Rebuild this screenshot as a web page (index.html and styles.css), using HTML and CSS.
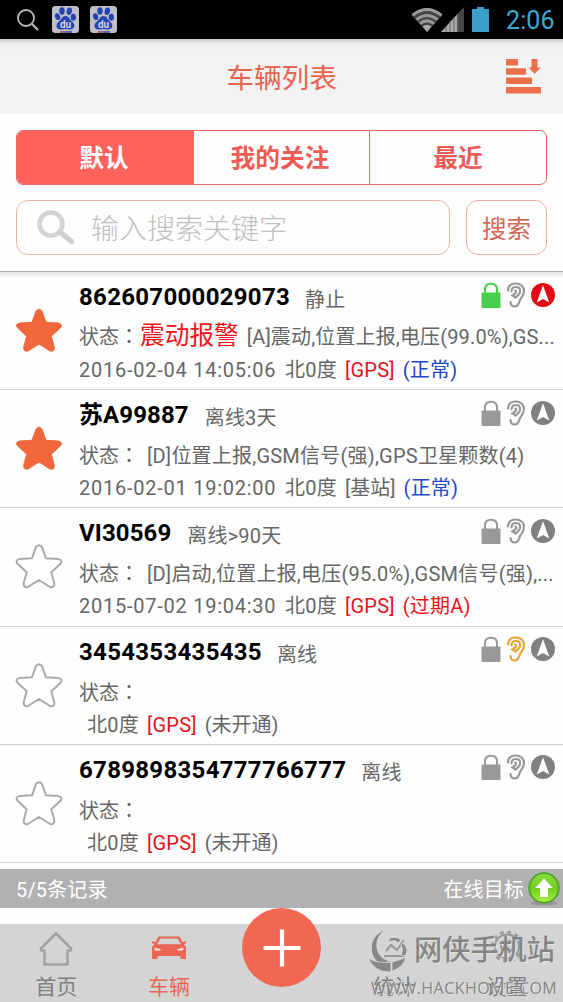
FILE: index.html
```html
<!DOCTYPE html>
<html lang="zh-CN">
<head>
<meta charset="utf-8">
<title>车辆列表</title>
<link rel="stylesheet" href="styles.css">
</head>
<body>
<svg class="defs" width="0" height="0">
  <defs>
    <symbol id="star" viewBox="0 0 48 46"><path d="M21 4.200Q24 .2 27 4.200L31 15.300L43.500 16.100Q48.400 17.400 45.200 21L36.300 29.200L39.300 40.200Q39.600 45 35 44L24 37L13 44Q8.400 45 8.700 40.200L11.700 29.200L2.800 21Q-.4 17.400 4.500 16.100L17 15.300Z"/></symbol>
    <symbol id="lock" viewBox="0 0 20 26"><rect x=".5" y="10.500" width="19" height="15.500" rx=".8" fill="currentColor"/><path d="M4 11V7.500Q4 1.700 10 1.700T16 7.500V11" fill="none" stroke="currentColor" stroke-width="2"/></symbol>
    <symbol id="ear" viewBox="0 0 20 26"><g fill="none" stroke="currentColor" stroke-width="2.200" stroke-linecap="round"><path d="M2 8.500C2.300 3.800 5.400 1.500 9.700 1.500C14.400 1.500 18 4.400 18 8.900C18 13.300 15.500 15 14 18C13 20.500 12.700 24.500 8.900 24.500C6.500 24.500 4.700 22.700 4.600 20.200"/><path d="M5.500 9.300C5.600 6.500 7.300 5 9.800 5C12.700 5 14.200 6.900 14.200 9.200C14.200 11.900 12 13 10.700 14.600C9.800 16 8.500 15.800 8.500 14.500C8.500 13.200 6.800 14.400 6 13.300"/><path d="M9.300 8.500Q11.200 9.300 9.500 11.100L7.500 12.500"/></g></symbol>
    <symbol id="nav" viewBox="0 0 24 24"><circle cx="12" cy="12" r="12" fill="currentColor"/><path d="M12 2.200L18.300 19.500L12 16L5.700 19.500Z" fill="#fff"/></symbol>
    <symbol id="paw" viewBox="0 0 27 27"><rect width="27" height="27" rx="3.500" fill="#bfbfc9"/><g fill="#2444b0"><ellipse cx="10" cy="5" rx="2.700" ry="3.700"/><ellipse cx="17.300" cy="5.200" rx="2.700" ry="3.700" transform="rotate(12 17.300 5.200)"/><ellipse cx="5.600" cy="10.700" rx="2.600" ry="3.500" transform="rotate(-15 5.600 10.700)"/><ellipse cx="21.300" cy="11.300" rx="2.600" ry="3.500"/><path d="M13.500 10C17 10 17.500 13.500 20 15.500C25 20 21 24 17.500 23.400Q13.500 22.700 9.500 23.400C4.500 24 2.500 19 7 15.500C9.500 13.500 10 10 13.500 10Z"/></g><text x="13.500" y="21.500" text-anchor="middle" class="paw-text">du</text><path d="M8 26H14" stroke="#a73d43" stroke-width="1.500"/><path d="M14 26H20" stroke="#2444b0" stroke-width="1.500"/></symbol>
  </defs>
</svg>
<main class="app">
  <div class="status">
    <svg class="st-search" viewBox="0 0 22 22"><circle cx="9" cy="9" r="8" fill="none" stroke="#bbb" stroke-width="1.800"/><path d="M15 15L21 21" stroke="#bbb" stroke-width="2.200"/></svg>
    <svg class="paw"><use href="#paw"/></svg>
    <svg class="paw"><use href="#paw"/></svg>
    <span class="grow"></span>
    <svg class="wifi" viewBox="0 0 32 24"><path d="M.5 7.300Q16-6 31.500 7.300L16 24Z" fill="#444"/><g fill="none" stroke="#999" stroke-width="3"><path d="M1.500 7.300Q16-4.500 30.500 7.300"/><path d="M5.500 11.600Q16 3.300 26.500 11.600"/><path d="M9 15.700Q16 10 23 15.700"/></g><path d="M11.500 18.500Q16 15 20.500 18.500L16 24Z" fill="#aaa"/></svg>
    <svg class="signal" viewBox="0 0 23 25"><path d="M0 25L23 0V25Z" fill="#444"/><path d="M0 25L16 7.600V25Z" fill="#aaa"/><path d="M5 19V25M9 14V25M13 10V25M17 6V25" stroke="#666" stroke-width="1"/></svg>
    <svg class="battery" viewBox="0 0 17 25"><path d="M0 2H5V0H12V2H17V25H0Z" fill="#3c9dc9"/></svg>
    <span class="clock">2:06</span>
  </div>
  <header class="header">
    <h1>车辆列表</h1>
    <svg class="sort" viewBox="0 0 35 35"><g fill="#e9704a"><rect x="0" y="0" width="12" height="6.500" rx="1"/><rect x="0" y="9.300" width="20" height="6.500" rx="1"/><rect x="0" y="18.500" width="26" height="6.500" rx="1"/><rect x="0" y="28" width="35" height="6.500" rx="1"/><path d="M25.500 0H31.500V8.500H35L28.500 15L22.500 8.500H25.500Z"/></g></svg>
  </header>
  <section class="filters">
    <div class="tabs"><div class="tab active">默认</div><div class="tab">我的关注</div><div class="tab">最近</div></div>
    <div class="search">
      <div class="field"><svg viewBox="0 0 38 35"><circle cx="14" cy="14" r="11.500" fill="none" stroke="#d3d3d3" stroke-width="4.500"/><path d="M23 22L34.500 31.500" stroke="#d0d0d0" stroke-width="5.500" stroke-linecap="round"/></svg><span>输入搜索关键字</span></div>
      <div class="button">搜索</div>
    </div>
  </section>
  <section class="list">
    <article class="row first">
      <svg class="star on"><use href="#star"/></svg>
      <div class="body">
        <div class="top"><b class="imei">862607000029073</b><span class="state">静止</span><span class="icons"><svg class="lock green"><use href="#lock"/></svg><svg class="ear"><use href="#ear"/></svg><svg class="dir red-icon"><use href="#nav"/></svg></span></div>
        <div class="desc"><span class="label">状态<i lang="zh-TW">：</i></span><em>震动报警</em><span class="msg">[A]震动,位置上报,电压(99.0%),GS...</span></div>
        <div class="meta"><span class="date">2016-02-04 14:05:06</span><span class="head">北0度</span><span class="red">[GPS]</span><span class="blue">(正常)</span></div>
      </div>
    </article>
    <article class="row">
      <svg class="star on"><use href="#star"/></svg>
      <div class="body">
        <div class="top"><b class="plate">苏A99887</b><span class="state">离线3天</span><span class="icons"><svg class="lock"><use href="#lock"/></svg><svg class="ear"><use href="#ear"/></svg><svg class="dir"><use href="#nav"/></svg></span></div>
        <div class="desc"><span class="label">状态<i lang="zh-TW">：</i></span><span class="msg">[D]位置上报,GSM信号(强),GPS卫星颗数(4)</span></div>
        <div class="meta"><span class="date">2016-02-01 19:02:00</span><span class="head">北0度</span><span>[基站]</span><span class="blue">(正常)</span></div>
      </div>
    </article>
    <article class="row">
      <svg class="star"><use href="#star"/></svg>
      <div class="body">
        <div class="top"><b class="plate">VI30569</b><span class="state">离线&gt;90天</span><span class="icons"><svg class="lock"><use href="#lock"/></svg><svg class="ear"><use href="#ear"/></svg><svg class="dir"><use href="#nav"/></svg></span></div>
        <div class="desc"><span class="label">状态<i lang="zh-TW">：</i></span><span class="msg">[D]启动,位置上报,电压(95.0%),GSM信号(强),...</span></div>
        <div class="meta"><span class="date">2015-07-02 19:04:30</span><span class="head">北0度</span><span class="red">[GPS]</span><span class="red">(过期A)</span></div>
      </div>
    </article>
    <article class="row">
      <svg class="star"><use href="#star"/></svg>
      <div class="body">
        <div class="top"><b class="imei">3454353435435</b><span class="state">离线</span><span class="icons"><svg class="lock"><use href="#lock"/></svg><svg class="ear orange"><use href="#ear"/></svg><svg class="dir"><use href="#nav"/></svg></span></div>
        <div class="desc"><span class="label">状态<i lang="zh-TW">：</i></span></div>
        <div class="meta nodate"><span class="head">北0度</span><span class="red">[GPS]</span><span>(未开通)</span></div>
      </div>
    </article>
    <article class="row">
      <svg class="star"><use href="#star"/></svg>
      <div class="body">
        <div class="top"><b class="imei">6789898354777766777</b><span class="state">离线</span><span class="icons"><svg class="lock"><use href="#lock"/></svg><svg class="ear"><use href="#ear"/></svg><svg class="dir"><use href="#nav"/></svg></span></div>
        <div class="desc"><span class="label">状态<i lang="zh-TW">：</i></span></div>
        <div class="meta nodate"><span class="head">北0度</span><span class="red">[GPS]</span><span>(未开通)</span></div>
      </div>
    </article>
  </section>
  <div class="summary"><span>5/5条记录</span><span class="grow"></span><span>在线目标</span>
    <svg class="up" viewBox="0 0 32 34"><defs><linearGradient id="lime" x2="0" y2="1"><stop stop-color="#8bdc47"/><stop offset=".5" stop-color="#6fd01c"/><stop offset="1" stop-color="#b3f046"/></linearGradient></defs><ellipse cx="16" cy="31" rx="13" ry="2.500" fill="#999"/><circle cx="16" cy="16" r="14.800" fill="url(#lime)" stroke="#4fa528" stroke-width="1.800"/><path d="M16 6.500L25 16H20V25H12V16H7Z" fill="#fff"/></svg>
  </div>
  <nav class="nav">
    <div class="item"><svg viewBox="0 0 36 36"><path d="M18 2.500L33 17.500V19.500H29.500V33.500H6.500V19.500H3V17.500Z" fill="none" stroke="#a3a3a3" stroke-width="2.600" stroke-linejoin="round"/></svg><span>首页</span></div>
    <div class="item current"><svg viewBox="0 0 36 36"><path d="M7.500 5.500H28.500L33 13.500L35 16V28H29.500V25H6.500V28H1V16L3 13.500Z" fill="#eb6754"/><path d="M9.500 7.500H26.500L30 13.200H6Z" fill="#d4d4d4"/><path d="M1 10L5 11.500L3.500 13.500L1 12ZM35 10L31 11.500L32.500 13.500L35 12Z" fill="#eb6754"/><path d="M3.500 16.500L10 18.500L9 19.500H4ZM32.500 16.500L26 18.500L27 19.500H32Z" fill="#eee"/></svg><span>车辆</span></div>
    <div class="item"></div>
    <div class="item"><svg viewBox="0 0 36 36"><path d="M10 20L15 14L21 19L28 9M8 25H29" fill="none" stroke="#999" stroke-width="2"/></svg><span>统计</span></div>
    <div class="item"><svg viewBox="0 0 36 36"><g fill="none" stroke="#999"><circle cx="18" cy="15.500" r="14.500" stroke-width="3" stroke-dasharray="3.700 3.893"/><circle cx="18" cy="15.500" r="12" stroke-width="2"/><circle cx="18" cy="15.500" r="6" stroke-width="2"/></g></svg><span>设置</span></div>
    <div class="fab"><svg viewBox="0 0 40 40"><path d="M20 1.500V38.500M1.500 20H38.500" stroke="#fff" stroke-width="4.200"/></svg></div>
    <div class="watermark">
      <svg viewBox="0 0 42 44"><g fill="#888" stroke="#ddd" stroke-width=".8"><path d="M17 0C5 8 6 28 22 31Q12 38 6 28C-1 16 6 3 17 0Z"/><path d="M0 28Q10 34 23 32V42Q7 43 0 28Z"/><path d="M24 41V32Q32 30 38 27Q36 37 24 41Z"/><path d="M22 8Q29 6 33 10L30 13Q27 9 20 12ZM35 13Q42 20 37 26L33 25Q36 19 33 15Z"/></g></svg>
      <strong>网侠手机站</strong><span>WWW.HACKHOME.COM</span>
    </div>
  </nav>
</main>
</body>
</html>
```
FILE: styles.css
```css
* { box-sizing: border-box; }
body { margin: 0; background: #fff; font-family: Roboto, "Noto Sans CJK SC", sans-serif; color: #666; }
svg { display: block; flex: none; }
.defs { position: absolute; }
.app { width: 563px; height: 1002px; display: flex; flex-direction: column; overflow: hidden; background: #fefefe; }
.grow { flex: 1; }

.status { height: 39px; flex: none; background: #000; display: flex; align-items: center; padding: 0 9px 0 17px; }
.st-search { width: 22px; height: 22px; margin-right: 13px; }
.paw { width: 27px; height: 27px; margin-right: 10.500px; }
.paw-text { font: bold 10px Roboto, sans-serif; fill: #d5d5e5; }
.wifi { width: 32px; height: 24px; margin-right: -2px; }
.signal { width: 23px; height: 25px; margin-right: 8px; }
.battery { width: 17px; height: 25px; margin-right: 17px; }
.clock { font-size: 25px; line-height: 39px; padding-top: 2px; color: #3ea9d6; width: 48px; letter-spacing: .1px; white-space: nowrap; }

.header { height: 75px; flex: none; display: flex; align-items: center; justify-content: flex-end; padding: 0 22px 0 0; background: linear-gradient(#c8c8c8, #eaeaea 4px, #f3f3f3 10px); }
h1 { margin: 0 169px 0 0; padding-top: 4px; font-size: 27.700px; font-weight: 400; line-height: 71px; color: #e76353; }
.sort { width: 35px; height: 35px; }

.filters { height: 158px; flex: none; padding: 16px 16px 0; display: flex; flex-direction: column; gap: 15px; border-bottom: 1px solid #aaa; }
.tabs { height: 55px; display: grid; grid-template-columns: 177px 176px 1fr; border: 1px solid #ee6666; border-radius: 7px; overflow: hidden; }
.tab { text-align: center; font-weight: 700; font-size: 24.700px; line-height: 55px; color: #ed5c57; padding-right: 3px; }
.tab + .tab { border-right: 1px solid #ed6868; }
.tab:last-child { border: 0; padding: 0; }
.tab.active { background: #ff615b; color: #fff; }
.search { display: flex; gap: 16px; height: 55px; }
.field { width: 435px; border: 1px solid #e5b5ad; border-radius: 12px; display: flex; align-items: center; padding-left: 20px; color: #c0c0c0; font-size: 28px; font-weight: 300; line-height: 48px; }
.field svg { width: 38px; height: 35px; margin-right: 16px; }
.field span { padding-top: 5px; }
.button { width: 81px; border: 1px solid #ecaaa0; border-radius: 12px; text-align: center; color: #d76655; font-size: 24.500px; line-height: 57px; height: 55px; }

.list { height: 591px; flex: none; display: grid; grid-template-rows: repeat(5, 1fr); }
.row { display: flex; border-bottom: 1px solid #ccc; padding: 0 8px 0 15px; font-size: 20px; min-width: 0; }
.row.first { background: linear-gradient(#e5e5e5, #fefefe 7px); }
.star { width: 48px; height: 46px; margin: 35px 16px 0 0; fill: #fff; stroke: #aaa; stroke-width: 2px; stroke-linejoin: round; overflow: visible; }
.star.on { fill: #f1673b; stroke: #f1673b; stroke-width: 1px; }
.body { flex: 1; min-width: 0; white-space: nowrap; }
.top { height: 46px; padding-top: 4px; display: flex; align-items: center; }
.top b { font-size: 24px; line-height: 44px; color: #000; margin-right: 15px; letter-spacing: .3px; }
.top .plate { margin-right: 16px; letter-spacing: .1px; }
.state { font-size: 20px; padding-top: 3px; letter-spacing: .2px; }
.icons { margin-left: auto; display: flex; gap: 5px; align-items: center; padding-bottom: 5px; color: #999; }
.lock { width: 20px; height: 26px; }
.ear { width: 20px; height: 26px; }
.dir { width: 24px; height: 24px; color: #808080; }
.green { color: #46cf4b; }
.orange { color: #e5a537; }
.red-icon { color: #e20b14; }
.desc { display: flex; align-items: baseline; height: 37px; line-height: 40px; }
.label { width: 68px; flex: none; }
.label i { font-style: normal; font-family: "Noto Sans CJK TC", sans-serif; line-height: 1; }
.first .desc { margin-top: -2px; margin-bottom: 2px; }
.first .label { width: 61px; }
em { font-style: normal; font-size: 24.700px; color: #f2131b; margin-right: 8px; }
.msg { letter-spacing: .22px; }
.first .msg { letter-spacing: .15px; }
.meta { display: flex; line-height: 31px; gap: 8px; }
.date { width: 198px; letter-spacing: .75px; }
.nodate { padding-left: 8px; }
.head { width: 52px; letter-spacing: .3px; }
.red, .blue { letter-spacing: .2px; }
.red { color: #e6131a; }
.blue { color: #2446c9; }

.summary { height: 39px; flex: none; margin: 6px 0 16px; background: #b1b1b1; display: flex; align-items: center; padding: 0 3px 0 16px; color: #fff; font-size: 20px; line-height: 37px; }
.summary span { padding-top: 4px; letter-spacing: .15px; }
.up { width: 32px; height: 34px; margin-left: 4px; }

.nav { height: 78px; flex: none; position: relative; display: grid; grid-template-columns: repeat(5, 1fr); background: #d4d4d4; }
.item { display: flex; flex-direction: column; align-items: center; padding-top: 7px; font-size: 21px; line-height: 30px; color: #808080; }
.item svg { width: 36px; height: 36px; margin-bottom: 5px; }
.current { color: #eb6754; }
.fab { position: absolute; left: 242px; top: -16px; width: 79px; height: 79px; border-radius: 50%; background: #f06852; display: grid; place-items: center; }
.fab svg { width: 40px; height: 40px; }
.watermark { position: absolute; left: 368px; top: 6px; width: 190px; display: grid; grid-template-columns: 46px 1fr; color: #858585; }
.watermark svg { width: 42px; height: 44px; }
.watermark strong { font-size: 28.200px; font-weight: 500; line-height: 42px; white-space: nowrap; text-shadow: 1px 1px #e2e2e2; }
.watermark span { grid-column: 1 / 3; font: 16px/26px "Open Sans", sans-serif; letter-spacing: .45px; padding-left: 3px; margin-top: 1px; white-space: nowrap; text-shadow: 1px 1px #e2e2e2; }
```
